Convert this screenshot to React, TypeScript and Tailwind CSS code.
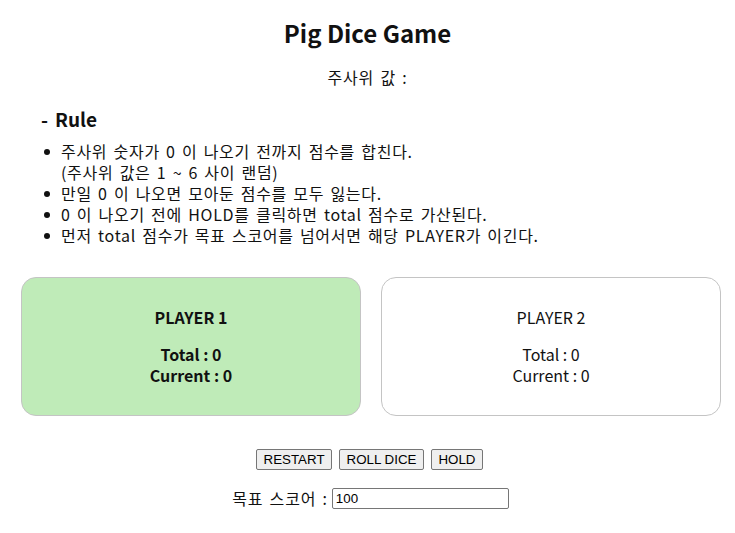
import React, { useState } from "react";

const rules = [
  ["주사위 숫자가 0 이 나오기 전까지 점수를 합친다.", "(주사위 값은 1 ~ 6 사이 랜덤)"],
  ["만일 0 이 나오면 모아둔 점수를 모두 잃는다."],
  ["0 이 나오기 전에 HOLD를 클릭하면 total 점수로 가산된다."],
  ["먼저 total 점수가 목표 스코어를 넘어서면 해당 PLAYER가 이긴다."],
];

function PlayerCard({
  name,
  total,
  current,
  active,
}: {
  name: string;
  total: number;
  current: number;
  active: boolean;
}) {
  return (
    <div
      className={`w-[340px] h-[139px] rounded-[15px] border border-[#c4c4c4] flex flex-col items-center pt-[28px] text-[16px] text-[#111] ${
        active ? "bg-[#bfebb8] font-bold" : "bg-white font-normal"
      }`}
    >
      <div className="leading-[22px]">{name}</div>
      <div className="mt-[16px] leading-[21px]">Total : {total}</div>
      <div className="leading-[21px]">Current : {current}</div>
    </div>
  );
}

export default function App() {
  const [goal, setGoal] = useState("100");

  return (
    <div className="w-[735px] min-h-[533px] bg-white text-[#111] font-['Noto_Sans_CJK_KR',sans-serif]">
      <h2 className="pt-[17px] text-center text-[24px] font-bold leading-[32px]">Pig Dice Game</h2>
      <div className="mt-[18px] text-center text-[16px] leading-[21px] tracking-[0.8px] [word-spacing:2px]">
        주사위 값 :
      </div>

      <h3 className="mt-[18px] pl-[41px] text-[19px] font-bold leading-[25px]">
        <span className="mr-[7px]">-</span>Rule
      </h3>
      <ul className="mt-[10px] pl-[61px] text-[16px] leading-[21px] tracking-[0.7px] [word-spacing:2px]">
        {rules.map((lines, i) => (
          <li key={i} className="relative">
            <span className="absolute left-[-17px] top-[8px] w-[6px] h-[6px] rounded-full bg-[#111]" />
            {lines.map((l, j) => (
              <div key={j}>{l}</div>
            ))}
          </li>
        ))}
      </ul>

      <div className="mt-[31px] pl-[21px] flex gap-[20px]">
        <PlayerCard name="PLAYER 1" total={0} current={0} active />
        <PlayerCard name="PLAYER 2" total={0} current={0} active={false} />
      </div>

      <div className="mt-[33px] pl-[4px] flex justify-center gap-[7px] font-['Liberation_Sans',Arial,sans-serif] text-[13.33px]">
        {["RESTART", "ROLL DICE", "HOLD"].map((b) => (
          <button
            key={b}
            className="h-[21px] px-[6.5px] border border-[#767676] rounded-[2px] bg-[#efefef] text-black leading-[19px]"
          >
            {b}
          </button>
        ))}
      </div>

      <div className="mt-[18px] pl-[6px] flex justify-center items-center gap-[4px]">
        <span className="text-[16px] leading-[21px] tracking-[0.8px] [word-spacing:2px]">목표 스코어 :</span>
        <input
          value={goal}
          onChange={(e) => setGoal(e.target.value)}
          className="w-[177px] h-[21px] border border-[#767676] rounded-[2px] px-[3px] font-['Liberation_Sans',Arial,sans-serif] text-[13.33px] text-black outline-none"
        />
      </div>
    </div>
  );
}
